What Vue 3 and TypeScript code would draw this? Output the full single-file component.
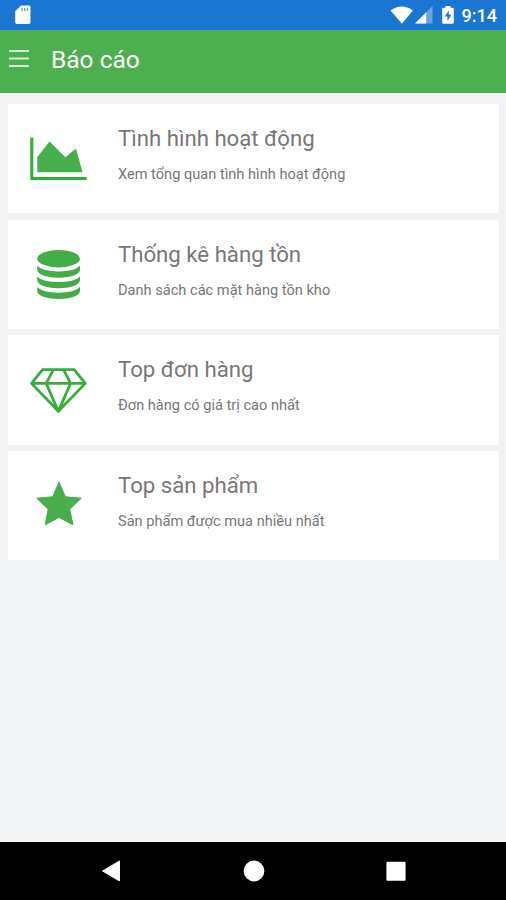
<script setup lang="ts">
type IconName = 'chart' | 'database' | 'diamond' | 'star'

interface Report {
  icon: IconName
  title: string
  description: string
}

const reports: Report[] = [
  { icon: 'chart', title: 'Tình hình hoạt động', description: 'Xem tổng quan tình hình hoạt động' },
  { icon: 'database', title: 'Thống kê hàng tồn', description: 'Danh sách các mặt hàng tồn kho' },
  { icon: 'diamond', title: 'Top đơn hàng', description: 'Đơn hàng có giá trị cao nhất' },
  { icon: 'star', title: 'Top sản phẩm', description: 'Sản phẩm được mua nhiều nhất' },
]
</script>

<template>
  <div class="screen">
    <header class="status">
      <svg class="sd" width="16" height="20" viewBox="0 0 16 20">
        <path d="M6 .5h7.8q1.700 0 1.700 1.700v15.100q0 1.700-1.700 1.700H1.900Q.2 19 .2 17.300V6.300Z" fill="#fff" />
        <path d="M7 3v3M9.700 3v3M12.400 3v3" stroke="#1976d2" stroke-width="1.300" opacity=".7" />
      </svg>
      <div class="indicators">
        <svg width="24" height="18" viewBox="0 0 24 18">
          <path d="M.6 4.400Q11.600-3.600 22.900 4.400L11.900 17.700Z" fill="#fff" />
        </svg>
        <svg class="signal" width="18" height="18" viewBox="0 0 18 18">
          <path d="M17.500 0V17.500H0Z" fill="#fff" opacity=".35" />
          <path d="M11.200 6.300V17.500H0Z" fill="#fff" />
        </svg>
        <svg class="battery" width="12" height="18" viewBox="0 0 12 18">
          <path d="M3.500 0h5v1.800h2q1.300 0 1.300 1.300v13.400q0 1.300-1.300 1.300h-9Q.2 17.800.2 16.500V3.100q0-1.300 1.300-1.300h2Z" fill="#fff" />
          <path d="M6.800 4.500 2.800 10.600h2.600v4.300l3.900-6.200H6.800Z" fill="#1976d2" />
        </svg>
        <span class="clock">9:14</span>
      </div>
    </header>

    <div class="toolbar">
      <svg class="menu" width="20" height="19" viewBox="0 0 20 19">
        <path d="M0 2h20M0 9.500h20M0 17h20" stroke="#d5f0d2" stroke-width="2" />
      </svg>
      <h1>Báo cáo</h1>
    </div>

    <main class="list">
      <article v-for="report in reports" :key="report.icon" class="card">
        <svg class="icon" width="60" height="109" viewBox="0 0 60 109">
          <template v-if="report.icon === 'chart'">
            <path d="M3.800 33.500V74.500H58.600" fill="none" stroke="#2fae37" stroke-width="3" />
            <path d="M9.300 53 21.500 37.500 37.300 53.200 48 44.500 54.500 68.200H9.300Z" fill="#46ae4b" />
          </template>
          <g v-else-if="report.icon === 'database'" fill="#43ad48">
            <ellipse cx="30.600" cy="38.700" rx="21.400" ry="8.700" />
            <path
              v-for="offset in [0, 10.6, 21.2]"
              :key="offset"
              :transform="`translate(0 ${offset})`"
              d="M9.200 45.600C14 53.400 47.200 53.400 52 45.600V49.500C52 60.500 9.200 60.500 9.200 49.500Z"
            />
          </g>
          <path
            v-else-if="report.icon === 'diamond'"
            d="M14.500 34.700H46.200L57.300 48.400 30.300 76.300 3.500 48.400ZM3.500 48.400H57.300M25.400 34.700 18.200 48.400 30.300 76.300 42.600 48.400 35.600 34.700"
            fill="none"
            stroke="#36ad3c"
            stroke-width="2.800"
            stroke-linejoin="round"
          />
          <path
            v-else
            d="M31 31 37.400 45.800 53.300 47.200 41.700 58.200 45 73.800 31 66.400 17.200 73.800 20.200 58.200 8.700 47.200 24.700 45.800Z"
            fill="#46ae4b"
            stroke="#46ae4b"
            stroke-width="1"
            stroke-linejoin="round"
          />
        </svg>
        <div class="copy">
          <h2>{{ report.title }}</h2>
          <p>{{ report.description }}</p>
        </div>
      </article>
    </main>

    <nav class="navbar">
      <svg width="20" height="22" viewBox="0 0 20 22">
        <path d="M18.500 1V21L1.500 11Z" fill="#fff" stroke="#fff" stroke-linejoin="round" />
      </svg>
      <svg width="22" height="22" viewBox="0 0 22 22"><circle cx="11" cy="11" r="10.400" fill="#fff" /></svg>
      <svg width="20" height="22" viewBox="0 0 20 22"><rect x=".4" y="1.700" width="19.200" height="19" rx="1" fill="#fff" /></svg>
    </nav>
  </div>
</template>

<style>
body {
  margin: 0;
}
</style>

<style scoped>
.screen {
  width: 506px;
  height: 900px;
  display: flex;
  flex-direction: column;
  overflow: hidden;
  background: #f1f3f4;
  font-family: Roboto, "Noto Sans", sans-serif;
}
svg {
  display: block;
  flex: none;
}
.status {
  height: 30px;
  box-sizing: border-box;
  padding: 0 9px 0 15px;
  display: flex;
  align-items: center;
  justify-content: space-between;
  background: #1976d2;
}
.indicators {
  display: flex;
  align-items: center;
}
.signal {
  margin-left: 1px;
}
.battery {
  margin-left: 9px;
}
.clock {
  margin-left: 8px;
  padding-top: 1px;
  color: #fff;
  font-size: 18px;
  font-weight: 500;
  line-height: 29px;
}
.toolbar {
  height: 62.500px;
  box-sizing: border-box;
  padding: 0 9px;
  display: flex;
  align-items: center;
  gap: 22px;
  background: #4caf50;
}
.toolbar .menu {
  margin-bottom: 5px;
}
h1 {
  margin: 0 0 2px;
  color: #fff;
  font-size: 24.500px;
  font-weight: 400;
  line-height: 30px;
}
.list {
  flex: 1;
  padding: 11.500px 7px 0 8px;
  display: flex;
  flex-direction: column;
  gap: 6.300px;
}
.card {
  height: 109.400px;
  display: flex;
  background: #fff;
}
.icon {
  margin-left: 20px;
}
.copy {
  margin-left: 30px;
  padding-top: 20px;
  color: #777;
  white-space: nowrap;
}
h2 {
  margin: 0;
  font-size: 22.200px;
  font-weight: 400;
  line-height: 28px;
}
p {
  margin: 12px 0 0;
  font-size: 14.600px;
  line-height: 20px;
}
.navbar {
  height: 58px;
  box-sizing: border-box;
  padding: 0 100px 0 101px;
  display: flex;
  align-items: center;
  justify-content: space-between;
  background: #000;
}
</style>
